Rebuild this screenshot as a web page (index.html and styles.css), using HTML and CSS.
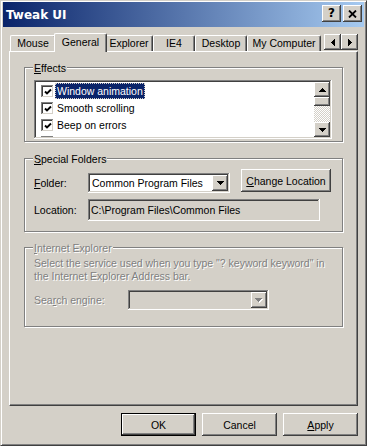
FILE: index.html
```html
<!DOCTYPE html>
<html lang="en">
<head>
    <meta charset="UTF-8">
    <title>Tweak UI</title>
    <link rel="stylesheet" href="styles.css">
</head>
<body>

    <div class="window">
        <!-- Title bar -->
        <div class="titlebar">
            <span class="title">Tweak UI</span>
            <div class="caption-buttons">
                <div class="caption-btn help">?</div>
                <div class="caption-btn">
                    <svg width="9" height="8" viewBox="0 0 9 8"><path d="M1 0.5l7 7M8 0.5l-7 7" stroke="#000" stroke-width="1.8"/></svg>
                </div>
            </div>
        </div>

        <div class="dialog">
            <!-- Tabs -->
            <div class="tabs">
                <div class="tab tab-mouse">Mouse</div>
                <div class="tab tab-general active">General</div>
                <div class="tab tab-explorer">Explorer</div>
                <div class="tab tab-ie4">IE4</div>
                <div class="tab tab-desktop">Desktop</div>
                <div class="tab tab-computer">My Computer</div>
                <div class="tab-scroll">
                    <div class="arrow-btn">
                        <svg width="4" height="7"><path d="M3 0h1v7H3V6H2V5H1V4H0V3h1V2h1V1h1z"/></svg>
                    </div>
                    <div class="arrow-btn">
                        <svg width="4" height="7"><path d="M0 0h1v1h1v1h1v1h1v1H3v1H2v1H1v1H0z"/></svg>
                    </div>
                </div>
            </div>

            <!-- Panel -->
            <div class="panel">
                <div class="group group-effects">
                    <div class="group-title"><u>E</u>ffects</div>
                    <div class="listbox">
                        <div class="list-items">
                            <div class="item">
                                <span class="check"><svg width="8" height="8"><polyline points="1,3.5 3,5.5 7,1.5" fill="none" stroke="#000" stroke-width="1.9"/></svg></span>
                                <span class="item-text selected">Window animation</span>
                            </div>
                            <div class="item">
                                <span class="check"><svg width="8" height="8"><polyline points="1,3.5 3,5.5 7,1.5" fill="none" stroke="#000" stroke-width="1.9"/></svg></span>
                                <span class="item-text">Smooth scrolling</span>
                            </div>
                            <div class="item">
                                <span class="check"><svg width="8" height="8"><polyline points="1,3.5 3,5.5 7,1.5" fill="none" stroke="#000" stroke-width="1.9"/></svg></span>
                                <span class="item-text">Beep on errors</span>
                            </div>
                            <div class="item">
                                <span class="check"></span>
                            </div>
                        </div>
                        <div class="vscroll">
                            <div class="scroll-btn">
                                <svg width="7" height="4"><path d="M3 0h1v1h1v1h1v1h1v1H0V3h1V2h1V1h1z"/></svg>
                            </div>
                            <div class="scroll-thumb"></div>
                            <div class="scroll-track"></div>
                            <div class="scroll-btn">
                                <svg width="7" height="4"><path d="M0 0h7v1H6v1H5v1H4v1H3V3H2V2H1V1H0z"/></svg>
                            </div>
                        </div>
                    </div>
                </div>

                <div class="group group-folders">
                    <div class="group-title"><u>S</u>pecial Folders</div>
                    <div class="row row-folder">
                        <span class="label"><u>F</u>older:</span>
                        <div class="combo">
                            <span class="combo-text">Common Program Files</span>
                            <div class="combo-btn">
                                <svg width="7" height="4"><path d="M0 0h7v1H6v1H5v1H4v1H3V3H2V2H1V1H0z"/></svg>
                            </div>
                        </div>
                        <div class="button change-btn"><u>C</u>hange Location</div>
                    </div>
                    <div class="row row-location">
                        <span class="label">Location:</span>
                        <div class="textfield">C:\Program Files\Common Files</div>
                    </div>
                </div>

                <div class="group group-ie disabled">
                    <div class="group-title"><u>I</u>nternet Explorer</div>
                    <p class="ie-text">Select the service used when you type "? keyword keyword" in the Internet Explorer Address bar.</p>
                    <div class="row row-search">
                        <span class="label">Sea<u>r</u>ch engine:</span>
                        <div class="combo combo-disabled">
                            <span class="combo-text"></span>
                            <div class="combo-btn">
                                <svg width="8" height="5"><path d="M1 1h7v1H7v1H6v1H5v1H4V4H3V3H2V2H1z" fill="#fff"/><path d="M0 0h7v1H6v1H5v1H4v1H3V3H2V2H1V1H0z" fill="#808080"/></svg>
                            </div>
                        </div>
                    </div>
                </div>
            </div>

            <!-- Buttons -->
            <div class="dialog-buttons">
                <div class="button default">OK</div>
                <div class="button">Cancel</div>
                <div class="button"><u>A</u>pply</div>
            </div>
        </div>
    </div>

</body>
</html>
```

FILE: styles.css
```css
body {
    margin: 0;
    font-family: "Liberation Sans", Arial, sans-serif;
    font-size: 10.5px;
    background-color: #d4d0c8;
    color: #000;
}

u {
    text-decoration: underline;
    text-underline-offset: 1px;
}

/* Ventana */
.window {
    width: 367px;
    height: 446px;
    box-sizing: border-box;
    background-color: #d4d0c8;
    border: 1px solid;
    border-color: #d4d0c8 #404040 #404040 #d4d0c8;
    box-shadow: inset 1px 1px #fff, inset -1px -1px #808080;
    padding: 1px 2px 2px 2px;
    display: flex;
    flex-direction: column;
}

.titlebar {
    height: 25px;
    flex-shrink: 0;
    background: linear-gradient(to right, #0a246a, #a6caf0);
    display: flex;
    align-items: center;
    justify-content: space-between;
    padding: 0 2px 0 3px;
}

.title {
    font-family: "DejaVu Sans", sans-serif;
    font-weight: bold;
    font-size: 12px;
    color: #fff;
}

.caption-buttons {
    display: flex;
    gap: 2px;
    margin-top: -2px;
}

.caption-btn {
    width: 19px;
    height: 17px;
    box-sizing: border-box;
    background-color: #d4d0c8;
    box-shadow: inset -1px -1px #404040, inset 1px 1px #fff, inset -2px -2px #808080, inset 2px 2px #d4d0c8;
    display: flex;
    align-items: center;
    justify-content: center;
}

.caption-btn.help {
    font-family: "DejaVu Sans", sans-serif;
    font-weight: bold;
    font-size: 12px;
    line-height: 17px;
}

/* Dialogo */
.dialog {
    padding: 6px 6px 0 6px;
}

.tabs {
    display: flex;
    align-items: flex-end;
    height: 18px;
    padding-left: 1px;
}

.tab {
    height: 16px;
    box-sizing: border-box;
    border-top: 1px solid #fff;
    border-left: 1px solid #fff;
    border-right: 1px solid #404040;
    border-radius: 2px 2px 0 0;
    box-shadow: inset -1px 0 #808080;
    text-align: center;
    line-height: 15px;
}

.tab.active {
    height: 19px;
    margin: 0 -2px -1px;
    position: relative;
    z-index: 1;
    background-color: #d4d0c8;
    line-height: 16px;
}

.tab-mouse { width: 46px; }
.tab-general { width: 49px; }
.tab-general.active { width: 53px; }
.tab-explorer { width: 48px; }
.tab-ie4 { width: 42px; }
.tab-desktop { width: 52px; }
.tab-computer { width: 74px; }

.tab-scroll {
    display: flex;
    margin-left: auto;
    margin-bottom: 1px;
}

.arrow-btn {
    width: 17px;
    height: 16px;
    box-sizing: border-box;
    box-shadow: inset -1px -1px #404040, inset 1px 1px #fff, inset -2px -2px #808080, inset 2px 2px #d4d0c8;
    display: flex;
    align-items: center;
    justify-content: center;
}

/* Panel de la pestaña */
.panel {
    height: 355px;
    box-sizing: border-box;
    border: 1px solid;
    border-color: #fff #404040 #404040 #fff;
    box-shadow: inset -1px -1px #808080;
    padding: 0 14px;
}

.group {
    border: 1px solid #808080;
    box-shadow: inset 1px 1px #fff, 1px 1px #fff;
    padding: 0 10px 0 9px;
    display: flex;
    flex-direction: column;
}

.group-title {
    align-self: flex-start;
    margin: -6px 0 0 -1px;
    padding: 0 1px;
    line-height: 13px;
    background-color: #d4d0c8;
}

.group-effects {
    margin-top: 15px;
    padding-bottom: 2px;
}

.group-folders {
    margin-top: 16px;
    padding-bottom: 10px;
}

.group-ie {
    margin-top: 15px;
    padding-bottom: 16px;
}

/* Lista */
.listbox {
    margin-top: 5px;
    height: 59px;
    box-sizing: border-box;
    padding: 2px;
    background-color: #fff;
    box-shadow: inset -1px -1px #fff, inset 1px 1px #808080, inset -2px -2px #d4d0c8, inset 2px 2px #404040;
    display: flex;
    overflow: hidden;
}

.list-items {
    flex: 1;
    overflow: hidden;
}

.item {
    height: 17px;
    display: flex;
    align-items: center;
    padding-left: 5px;
}

.check {
    width: 13px;
    height: 13px;
    box-sizing: border-box;
    background-color: #fff;
    box-shadow: inset -1px -1px #fff, inset 1px 1px #808080, inset -2px -2px #d4d0c8, inset 2px 2px #404040;
    display: flex;
    align-items: center;
    justify-content: center;
    margin-top: 1px;
}

.check svg {
    margin: 1px 0 0 1px;
}

.item-text {
    margin-left: 1px;
    padding: 0 2px;
    line-height: 16px;
}

.item-text.selected {
    background-color: #0a246a;
    color: #fff;
    outline: 1px dotted #d4d0c8;
    outline-offset: -1px;
}

.vscroll {
    width: 16px;
    display: flex;
    flex-direction: column;
}

.scroll-btn {
    height: 15px;
    box-sizing: border-box;
    background-color: #d4d0c8;
    box-shadow: inset -1px -1px #404040, inset 1px 1px #fff, inset -2px -2px #808080, inset 2px 2px #d4d0c8;
    display: flex;
    align-items: center;
    justify-content: center;
}

.scroll-thumb {
    height: 9px;
    box-sizing: border-box;
    background-color: #d4d0c8;
    box-shadow: inset -1px -1px #404040, inset 1px 1px #fff, inset -2px -2px #808080, inset 2px 2px #d4d0c8;
}

.scroll-track {
    flex: 1;
    background-image: repeating-conic-gradient(#d4d0c8 0 25%, #fff 0 50%);
    background-size: 2px 2px;
}

/* Carpetas especiales */
.row {
    display: flex;
    align-items: flex-start;
}

.label {
    width: 54px;
    flex-shrink: 0;
}

.row-folder {
    margin-top: 3px;
}

.row-folder .label {
    margin-top: 4px;
    line-height: 20px;
}

.combo {
    width: 142px;
    height: 20px;
    box-sizing: border-box;
    padding: 2px;
    background-color: #fff;
    box-shadow: inset -1px -1px #fff, inset 1px 1px #808080, inset -2px -2px #d4d0c8, inset 2px 2px #404040;
    display: flex;
    align-items: center;
}

.row-folder .combo {
    margin-top: 4px;
}

.combo-text {
    flex: 1;
    padding-left: 2px;
    white-space: nowrap;
}

.combo-btn {
    width: 16px;
    height: 16px;
    box-sizing: border-box;
    background-color: #d4d0c8;
    box-shadow: inset -1px -1px #404040, inset 1px 1px #fff, inset -2px -2px #808080, inset 2px 2px #d4d0c8;
    display: flex;
    align-items: center;
    justify-content: center;
}

.button {
    height: 23px;
    box-sizing: border-box;
    background-color: #d4d0c8;
    box-shadow: inset -1px -1px #404040, inset 1px 1px #fff, inset -2px -2px #808080, inset 2px 2px #d4d0c8;
    display: flex;
    align-items: center;
    justify-content: center;
}

.change-btn {
    width: 90px;
    margin-left: auto;
    margin-right: 1px;
}

.row-location {
    margin-top: 6px;
    align-items: center;
}

.textfield {
    width: 232px;
    height: 22px;
    box-sizing: border-box;
    padding: 0 3px;
    line-height: 22px;
    box-shadow: inset -1px -1px #fff, inset 1px 1px #808080, inset -2px -2px #d4d0c8, inset 2px 2px #404040;
}

/* Internet Explorer (deshabilitado) */
.disabled .group-title,
.disabled .ie-text,
.disabled .label {
    color: #808080;
    text-shadow: 1px 1px #fff;
}

.ie-text {
    margin: 2px 0 0 0;
    line-height: 13px;
}

.row-search {
    margin-top: 7px;
    align-items: center;
}

.row-search .label {
    width: 94px;
}

.combo-disabled {
    width: 141px;
    background-color: #d4d0c8;
}

/* Botones */
.dialog-buttons {
    display: flex;
    justify-content: flex-end;
    gap: 6px;
    margin-top: 7px;
}

.dialog-buttons .button {
    width: 75px;
}

.button.default {
    box-shadow: inset 0 0 0 1px #000, inset -2px -2px #404040, inset 2px 2px #fff, inset -3px -3px #808080;
}
```
